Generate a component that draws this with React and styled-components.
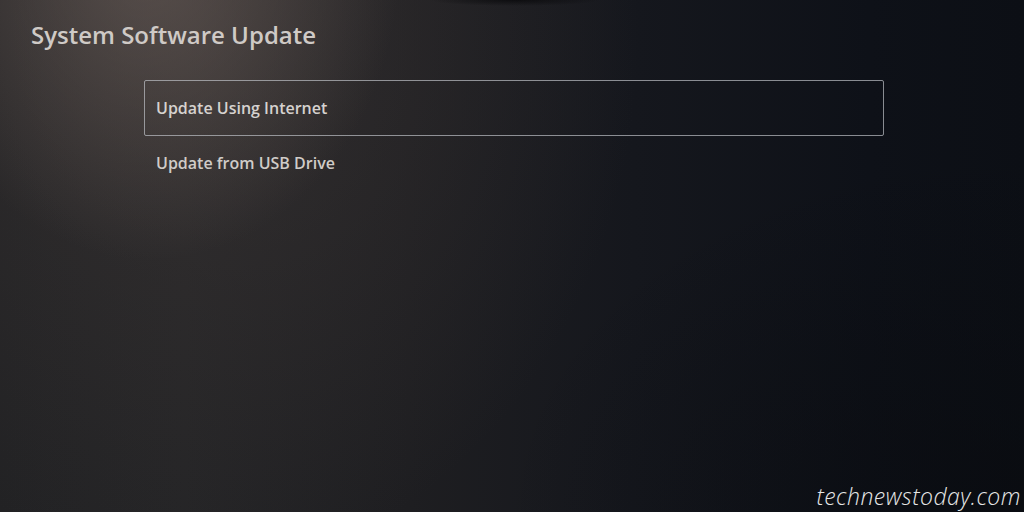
import React from "react";
import styled, { createGlobalStyle } from "styled-components";

const GlobalStyle = createGlobalStyle`
  html, body {
    margin: 0;
    padding: 0;
    background: #14151a;
  }
  * {
    box-sizing: border-box;
  }
`;

const Screen = styled.div`
  position: relative;
  width: 1024px;
  height: 512px;
  overflow: hidden;
  font-family: "Open Sans", "Lato", sans-serif;
  color: #d2cfcc;
  background:
    radial-gradient(ellipse 85px 6px at 515px 0px, rgba(6, 6, 8, 0.7), rgba(6, 6, 8, 0) 100%),
    radial-gradient(ellipse 250px 300px at 150px -40px, rgba(118, 104, 98, 0.55), rgba(118, 104, 98, 0) 100%),
    radial-gradient(ellipse 440px 540px at 200px 30px, rgba(70, 62, 60, 0.45), rgba(70, 62, 60, 0) 100%),
    radial-gradient(ellipse 520px 360px at 1024px 512px, rgba(8, 10, 14, 0.6), rgba(8, 10, 14, 0) 100%),
    linear-gradient(90deg, #222224 0%, #242426 18%, #1e1e21 40%, #15171d 62%, #0e1118 85%, #0c0f15 100%);
`;

const Header = styled.h1`
  margin: 0;
  padding: 23px 0 0 31px;
  font-size: 24px;
  line-height: 24px;
  font-weight: 600;
  color: #cfcac6;
`;

const Menu = styled.ul`
  list-style: none;
  margin: 33px 0 0 144px;
  padding: 0;
  width: 740px;
`;

const MenuItem = styled.li`
  display: flex;
  align-items: center;
  height: ${({ $focused }) => ($focused ? "56px" : "53px")};
  padding-left: 11px;
  font-size: 16px;
  font-weight: 600;
  color: ${({ $focused }) => ($focused ? "#d6d2cf" : "#d0ccc8")};
  border: 1px solid ${({ $focused }) => ($focused ? "rgba(190, 192, 198, 0.7)" : "transparent")};
  border-radius: 2px;
`;

const Watermark = styled.span`
  position: absolute;
  right: 3px;
  bottom: 0px;
  font-family: "Open Sans", sans-serif;
  font-style: italic;
  font-weight: 300;
  font-size: 23px;
  letter-spacing: 0.5px;
  color: #e6e6e6;
`;

export default function App() {
  return (
    <>
      <GlobalStyle />
      <Screen>
        <Header>System Software Update</Header>
        <Menu>
          <MenuItem $focused>Update Using Internet</MenuItem>
          <MenuItem>Update from USB Drive</MenuItem>
        </Menu>
        <Watermark>technewstoday.com</Watermark>
      </Screen>
    </>
  );
}
